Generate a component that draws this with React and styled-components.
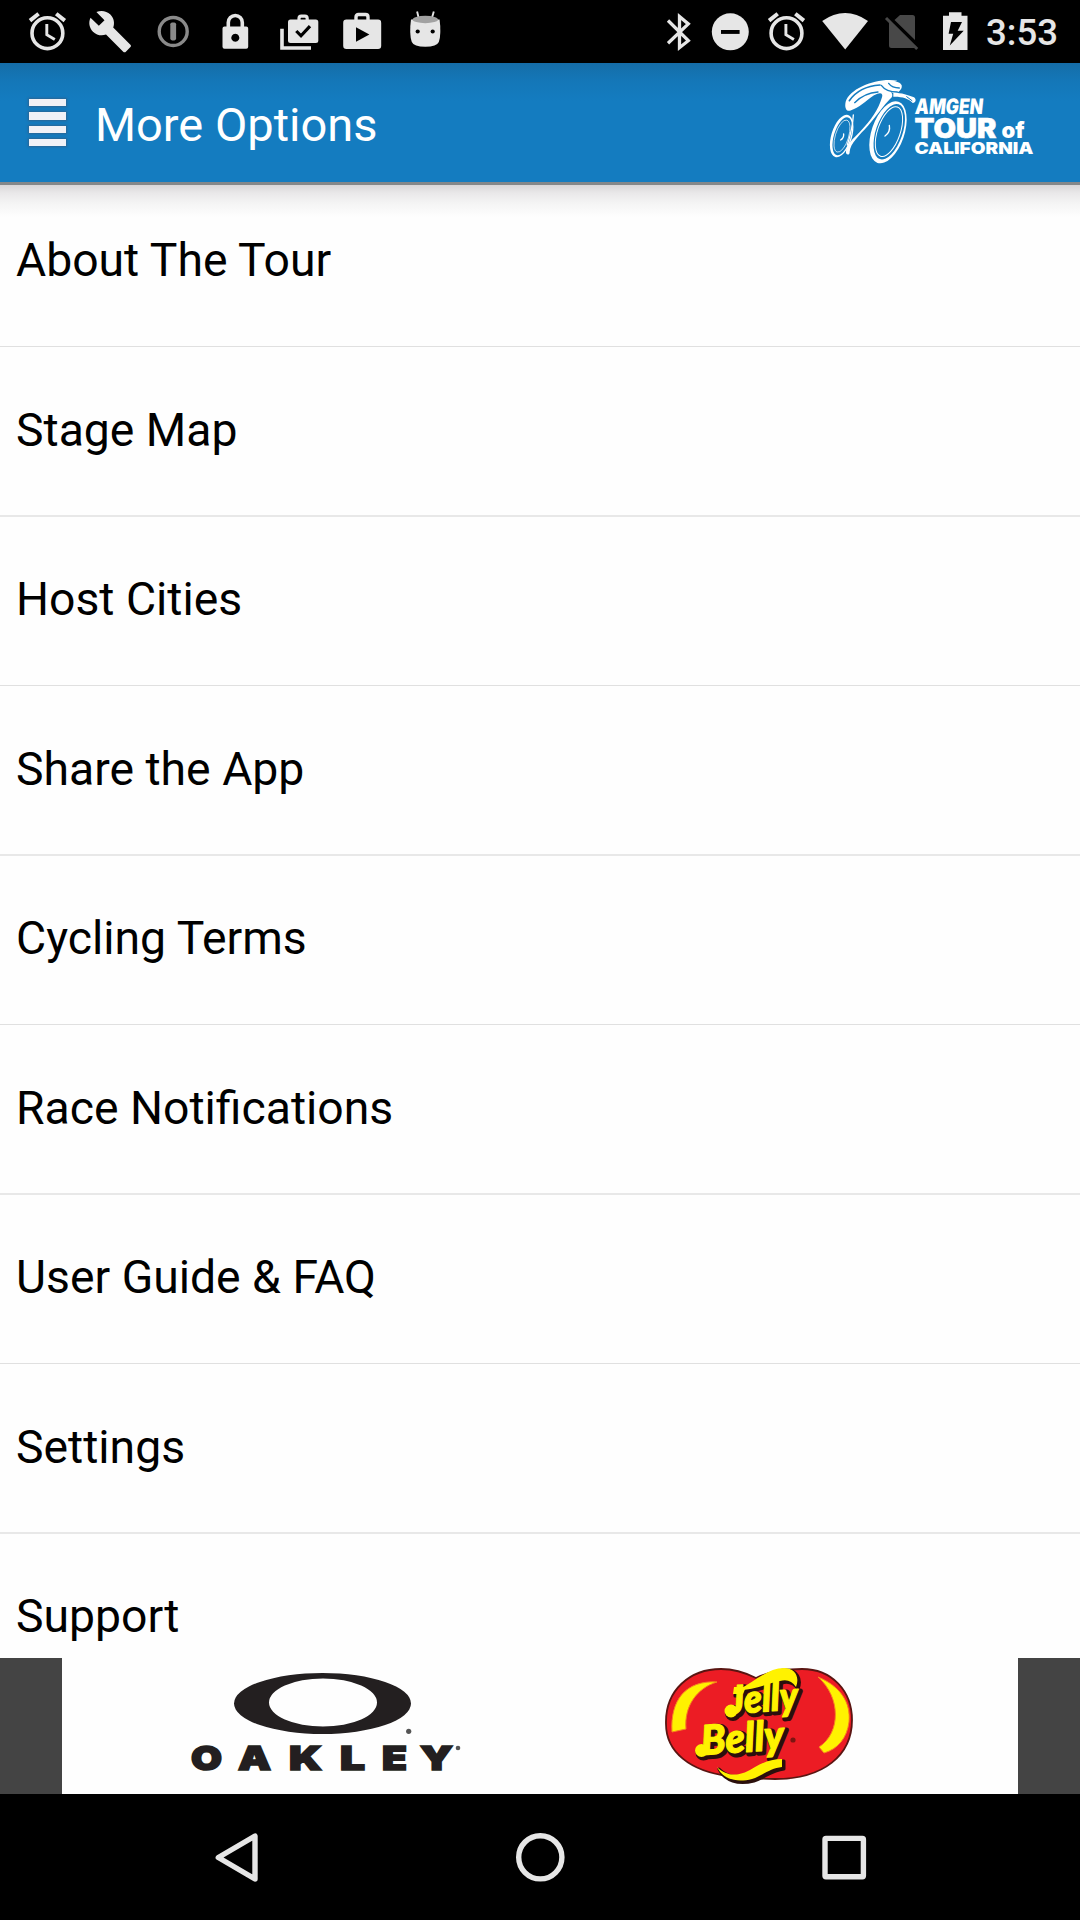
import React from "react";
import styled, { createGlobalStyle } from "styled-components";

const ink = "#e6e6e6";

const Global = createGlobalStyle`
  *, *::before, *::after { box-sizing: border-box; }
  html, body { margin: 0; padding: 0; background: #000; }
  body { font-family: Roboto, "Noto Sans", sans-serif; }
  svg { display: block; }
`;

const Screen = styled.div`
  width: 1080px;
  height: 1920px;
  display: flex;
  flex-direction: column;
  background: #fefefe;
  overflow: hidden;
`;

const StatusBar = styled.header`
  height: 63px;
  flex: none;
  display: flex;
  justify-content: space-between;
  padding: 0 22px 0 16px;
  background: #000;
`;

const StatusGroup = styled.div`
  display: flex;
  align-items: center;
`;

const Slot = styled.svg`
  width: ${(p) => p.$w}px;
  height: 63px;
  flex: none;
`;

const Clock = styled.time`
  width: 77px;
  padding: 3px 0 0 5px;
  color: ${ink};
  font-size: 36.6px;
  font-weight: 500;
  line-height: 60px;
  white-space: nowrap;
`;

const TitleBar = styled.div`
  height: 122px;
  flex: none;
  display: flex;
  align-items: center;
  padding: 0 40px 0 29px;
  border-bottom: 3px solid #84888a;
  background: linear-gradient(#156da8 0, #1477b8 18px, #147cc0 38px, #147cc0 100%);
`;

const MenuButton = styled.button`
  display: flex;
  flex-direction: column;
  gap: 6px;
  padding: 0;
  margin: 0 29px 0 0;
  border: 0;
  background: none;
`;

const MenuLine = styled.span`
  width: 37px;
  height: 7.2px;
  background: #f1f1f6;
  box-shadow: 0 0 2px 1px rgba(60, 85, 115, 0.6);
`;

const Title = styled.h1`
  flex: 1;
  margin: 0;
  color: #fff;
  font-size: 47px;
  font-weight: 400;
  line-height: 56px;
  padding-top: 5px;
`;

const TourLogo = styled.svg`
  width: 216px;
  height: 94px;
  flex: none;
`;

const List = styled.ul`
  flex: 1;
  min-height: 0;
  overflow: hidden;
  list-style: none;
  margin: 0;
  padding: 0;
  background: linear-gradient(#d9d7d8 0, #e9e8e9 8px, #f4f4f4 18px, #fefefe 32px);
`;

const Row = styled.li`
  height: 169px;
  display: flex;
  align-items: flex-end;
  padding: 0 16px 58px;
  border-bottom: 1px solid #e0e0e0;
  color: #000;
  font-size: 46.3px;
  line-height: 56px;
  white-space: nowrap;

  &:nth-child(even) {
    height: 170px;
    padding-bottom: 57px;
    border-bottom: 2px solid #e8e8e8;
  }

  &:first-child {
    height: 162px;
  }
`;

const SponsorStrip = styled.div`
  height: 136px;
  flex: none;
  display: flex;
  padding: 0 62px;
  background: #444;
`;

const SponsorPanel = styled.div`
  flex: 1;
  display: flex;
  justify-content: space-between;
  padding: 0 158px 0 118px;
  background: #fefefe;
`;

const SponsorLogo = styled.svg`
  width: ${(p) => p.$w}px;
  height: 136px;
  flex: none;
`;

const NavBar = styled.nav`
  height: 126px;
  flex: none;
  display: flex;
  justify-content: center;
  gap: 244px;
  background: #000;
`;

const NavIcon = styled.svg`
  width: 60px;
  height: 126px;
  fill: none;
  stroke: ${ink};
  stroke-width: 5.4;
  stroke-linejoin: round;
`;

const options = [
  "About The Tour",
  "Stage Map",
  "Host Cities",
  "Share the App",
  "Cycling Terms",
  "Race Notifications",
  "User Guide & FAQ",
  "Settings",
  "Support",
];

function Alarm({ x, w, cx }) {
  return (
    <Slot $w={w} viewBox={`${x} 0 ${w} 63`}>
      <g transform={`translate(${cx} 33.2)`} fill="none" stroke={ink}>
        <circle r="15.4" strokeWidth="3.6" />
        <path d="M-.6-9.2V1.6L7.4 6.4" strokeWidth="2.9" />
        <path d="M-17.4-12.6L-8.8-19.4M17.4-12.6L8.8-19.4" strokeWidth="4" />
      </g>
    </Slot>
  );
}

function StatusIcons() {
  return (
    <StatusGroup>
      <Alarm x={16} w={63} cx={47.4} />
      <Slot $w={63} viewBox="79 0 63 63">
        <path
          transform="translate(87.5 8.8) scale(1.89)"
          fill={ink}
          d="M22.7 19l-9.1-9.1c.9-2.3.4-5-1.5-6.9-2-2-5-2.4-7.4-1.3L9 6 6 9 1.6 4.7C.4 7.1.9 10.1 2.9 12.1c1.9 1.9 4.6 2.4 6.9 1.5l9.1 9.1c.4.4 1 .4 1.4 0l2.3-2.3c.5-.4.5-1.1.1-1.4z"
        />
      </Slot>
      <Slot $w={63} viewBox="142 0 63 63">
        <circle cx="173.2" cy="31.5" r="14" fill="none" stroke="#8a8a8a" strokeWidth="3.4" />
        <rect x="170.3" y="22.4" width="5.8" height="18" rx="1.8" fill="#8a8a8a" />
      </Slot>
      <Slot $w={63} viewBox="205 0 63 63">
        <path d="M228.3 28v-5.5a7 7 0 0 1 14 0V28" fill="none" stroke={ink} strokeWidth="3.6" />
        <path
          fill={ink}
          fillRule="evenodd"
          d="M224.5 26.6h21.7a2 2 0 0 1 2 2v18.2a2 2 0 0 1-2 2h-21.7a2 2 0 0 1-2-2V28.6a2 2 0 0 1 2-2zM235.3 33.7a4 4 0 1 0 .01 0z"
        />
      </Slot>
      <Slot $w={63} viewBox="268 0 63 63">
        <path d="M282 28.7v19.3h29" fill="none" stroke={ink} strokeWidth="3.6" />
        <path d="M299 20v-1.5q0-2.3 2.3-2.3h3.6q2.3 0 2.3 2.3V20" fill="none" stroke={ink} strokeWidth="3.2" />
        <rect x="288" y="19.6" width="30.3" height="23.4" rx="2.5" fill={ink} />
        <path d="M296.3 31l4.7 4.8 9-9.6" fill="none" stroke="#000" strokeWidth="3.2" />
      </Slot>
      <Slot $w={63} viewBox="331 0 63 63">
        <path d="M356 21v-4q0-2.5 2.5-2.5h7q2.5 0 2.5 2.5v4" fill="none" stroke={ink} strokeWidth="3.4" />
        <rect x="343.2" y="19.6" width="38" height="29.3" rx="3.2" fill={ink} />
        <path d="M356 27.2v14.6l13.4-7.4z" fill="#000" />
      </Slot>
      <Slot $w={63} viewBox="394 0 63 63">
        <path d="M417.1 11.5l1.6 6.500M433.8 11.5l-1.900 6.500" stroke={ink} strokeWidth="1.900" />
        <path d="M411 19.5q-2 14.5.8 22.5 2 4.8 13.5 4.8t13.5-4.8q2.7-8 .8-22.500z" fill={ink} />
        <ellipse cx="425.3" cy="19.5" rx="12.8" ry="3.7" fill="#a2a2a2" />
        <circle cx="417.7" cy="31.5" r="2.1" fill="#000" />
        <circle cx="432.7" cy="31.5" r="2.1" fill="#000" />
      </Slot>
    </StatusGroup>
  );
}

function SystemIcons() {
  return (
    <StatusGroup>
      <Slot $w={56} viewBox="651 0 56 63">
        <path
          d="M668 20.5l20.3 20.2-8.8 7V16.5l8.8 7.4L668 43.3"
          fill="none"
          stroke={ink}
          strokeWidth="3.3"
        />
      </Slot>
      <Slot $w={50} viewBox="707 0 50 63">
        <circle cx="730.3" cy="31.8" r="18.5" fill={ink} />
        <rect x="721" y="30" width="18.6" height="3.9" fill="#000" />
      </Slot>
      <Alarm x={757} w={58} cx={786.5} />
      <Slot $w={58} viewBox="815 0 58 63">
        <path d="M822.2 21q22.9-15.8 45.8 0L845.2 49.5z" fill={ink} />
      </Slot>
      <Slot $w={56} viewBox="873 0 56 63">
        <path
          d="M900 15h12.5a2.5 2.5 0 0 1 2.5 2.5V40L894.5 20zM889 22l26 25.5q-1 .5-2.5.5h-21a2.5 2.5 0 0 1-2.5-2.5z"
          fill="#484848"
        />
        <path d="M886 18l31.2 31" stroke="#484848" strokeWidth="3" />
      </Slot>
      <Slot $w={52} viewBox="929 0 52 63">
        <path d="M943 15.7h6V12.3h12.5v3.4h6V50H943z" fill={ink} />
        <path d="M951 22h11l-4.3 8.7h6L949.8 45.5l3.4-11.8h-4.6z" fill="#000" />
      </Slot>
      <Clock>3:53</Clock>
    </StatusGroup>
  );
}

function AmgenLogo() {
  return (
    <TourLogo viewBox="824 76 216 94">
      <g transform="translate(810 60) scale(.3333)">
        <g fill="#fff">
          <path d="M262 62C200 52 120 85 107 125c-4 18 2 30 13 27 30-10 45-27 72-46 20-12 28-6 24 6-10 35-32 68-66 103-22 22-40 38-42 58-2 14 12 14 11 2 2-25 28-48 55-78 30-34 48-62 66-80 14-10 8-24-25-39z" />
          <path d="M212 72c20-14 58-12 63 4 2 10-5 19-18 24-18-2-36-12-45-28z" />
          <path d="M250 98c25 0 45 7 62 14 8 6 6 16-4 17-12-14-34-20-58-19z" />
        </g>
        <g fill="none" stroke="#147cc0" strokeLinecap="round">
          <path d="M118 122c18-26 50-44 92-47" strokeWidth="5" />
          <path d="M134 128c18-18 40-30 70-32" strokeWidth="4" />
          <path d="M214 76c10 14 28 20 48 20M236 70c6 8 18 14 32 14" strokeWidth="4" />
          <path d="M290 110l16 12" strokeWidth="3" />
        </g>
        <g transform="translate(95 228) rotate(17)" fill="#fff" fillRule="evenodd">
          <path d="M-31 0a31 66 0 1 0 62 0a31 66 0 1 0-62 0zM-23 0a25 59 0 1 0 50 0a25 59 0 1 0-50 0z" />
          <ellipse cx="1" rx="20" ry="50" fill="none" stroke="#fff" strokeWidth="2" />
        </g>
        <g transform="translate(234 217) rotate(19)" fill="#fff" fillRule="evenodd">
          <path d="M-49 0a49 97 0 1 0 98 0a49 97 0 1 0-98 0zM-37 -3a40 87 0 1 0 80 0a40 87 0 1 0-80 0z" />
          <ellipse cx="2" cy="-3" rx="34" ry="78" fill="none" stroke="#fff" strokeWidth="3" />
        </g>
        <g fill="none" stroke="#fff" strokeWidth="4" strokeLinecap="round">
          <path d="M92 240q10-6 9-18M225 228q17-12 13-32" />
          <path d="M130 165q-2 40-18 90" />
        </g>
      </g>
      <g fill="#fff" stroke="#fff" fontFamily="Inter, Roboto, sans-serif" fontWeight="900">
        <text transform="translate(914.5 114) skewX(-6)" fontSize="21.5" strokeWidth="0" textLength="68" lengthAdjust="spacingAndGlyphs">AMGEN</text>
        <text x="914.5" y="137.6" fontSize="26.5" strokeWidth=".5" textLength="82" lengthAdjust="spacingAndGlyphs">TOUR</text>
        <text x="1001.5" y="137.6" fontSize="22" strokeWidth="0" textLength="23" lengthAdjust="spacingAndGlyphs">of</text>
        <text x="914.5" y="153.8" fontSize="16.6" strokeWidth="0" textLength="119" lengthAdjust="spacingAndGlyphs">CALIFORNIA</text>
      </g>
    </TourLogo>
  );
}

const oakleyLetters = [
  ["O", 191, 31],
  ["A", 238, 33],
  ["K", 289, 33],
  ["L", 340, 25],
  ["E", 382, 25],
  ["Y", 420, 33],
];

function OakleyLogo() {
  return (
    <SponsorLogo $w={290} viewBox="180 1658 290 136">
      <path
        fill="#231f20"
        fillRule="evenodd"
        d="M234 1703.5a88.500 30.500 0 1 0 177 0a88.500 30.500 0 1 0-177 0zM269 1702.500a54 24 0 1 0 108 0a54 24 0 1 0-108 0z"
      />
      <circle cx="408.7" cy="1731.3" r="2.6" fill="#555" />
      <circle cx="458" cy="1748" r="2.3" fill="#555" />
      <g fill="#231f20" stroke="#231f20" strokeWidth="1.6" fontFamily="Inter, Roboto, sans-serif" fontWeight="900" fontSize="33">
        {oakleyLetters.map(([letter, x, width]) => (
          <text key={letter} x={x} y="1769.6" textLength={width} lengthAdjust="spacingAndGlyphs">
            {letter}
          </text>
        ))}
      </g>
    </SponsorLogo>
  );
}

function Wordmark() {
  return (
    <g fontFamily="Lato, sans-serif" fontStyle="italic" fontWeight="900">
      <text transform="translate(730 1714) rotate(-4)" fontSize="39" textLength="69" lengthAdjust="spacingAndGlyphs">Jelly</text>
      <text transform="translate(702 1755) rotate(-4)" fontSize="41" textLength="83" lengthAdjust="spacingAndGlyphs">Belly</text>
    </g>
  );
}

function Flourishes() {
  return (
    <>
      <path d="M738 1690c16-8 30-22 46-22 11 0 16 9 12 19-4-6-9-8-16-6-14 3-26 9-42 9z" />
      <path d="M717 1767c12 12 26 8 38 0 9-5 17-8 27-8v8c-12 1-20 9-30 12-16 4-29 0-35-12z" />
      <path d="M734 1687h12l-3 7h-10z" />
      <circle cx="731" cy="1711" r="6.5" />
      <circle cx="701.5" cy="1750.5" r="6.5" />
    </>
  );
}

function JellyBellyLogo() {
  return (
    <SponsorLogo $w={200} viewBox="660 1658 200 136">
      <path
        d="M666 1724c-1-34 24-55 55-55 13 0 23 3 35 9 15-7 30-9 46-9 30 0 50 22 50 51 0 35-28 59-77 59-20 0-33-2-47-3-38-5-62-24-62-52z"
        fill="#ec1c24"
        stroke="#5a1512"
        strokeWidth="1.8"
      />
      <path d="M672 1732c-2-32 14-52 45-50-20 6-33 24-31 47z" fill="#fff200" stroke="#f58220" strokeWidth="1" />
      <path d="M818 1677c22 9 33 25 31 45-2 16-11 27-25 31l-5-6c22-14 22-50-1-70z" fill="#fff200" stroke="#f58220" strokeWidth="1" />
      <g transform="translate(2 2)" fill="#2b0f0c" stroke="#2b0f0c" strokeLinejoin="round" strokeWidth="3">
        <Flourishes />
      </g>
      <g transform="translate(2 2)" fill="#2b0f0c" stroke="#2b0f0c" strokeLinejoin="round" strokeWidth="5">
        <Wordmark />
      </g>
      <g fill="#fff200">
        <Flourishes />
      </g>
      <g fill="#fff200" stroke="#fff200" strokeLinejoin="round" strokeWidth="1.2">
        <Wordmark />
      </g>
      <circle cx="793" cy="1740" r="2.6" fill="#7c1512" />
    </SponsorLogo>
  );
}

export default function App() {
  return (
    <>
      <Global />
      <Screen>
        <StatusBar>
          <StatusIcons />
          <SystemIcons />
        </StatusBar>
        <TitleBar>
          <MenuButton aria-label="Menu">
            <MenuLine />
            <MenuLine />
            <MenuLine />
            <MenuLine />
          </MenuButton>
          <Title>More Options</Title>
          <AmgenLogo />
        </TitleBar>
        <List>
          {options.map((label) => (
            <Row key={label}>{label}</Row>
          ))}
        </List>
        <SponsorStrip>
          <SponsorPanel>
            <OakleyLogo />
            <JellyBellyLogo />
          </SponsorPanel>
        </SponsorStrip>
        <NavBar>
          <NavIcon viewBox="206 1794 60 126">
            <path d="M218.3 1857.5L255 1836v43z" />
          </NavIcon>
          <NavIcon viewBox="510 1794 60 126">
            <circle cx="540.3" cy="1857.3" r="21.6" />
          </NavIcon>
          <NavIcon viewBox="814 1794 60 126">
            <rect x="825" y="1838.4" width="38.4" height="38.4" rx="1" />
          </NavIcon>
        </NavBar>
      </Screen>
    </>
  );
}
